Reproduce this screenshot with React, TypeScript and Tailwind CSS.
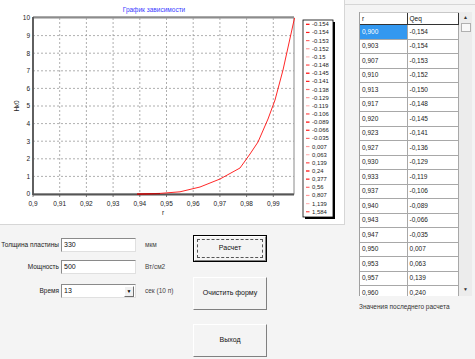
import React from 'react'

const xTicks = ['0,9', '0,91', '0,92', '0,93', '0,94', '0,95', '0,96', '0,97', '0,98', '0,99']
const legend = [
  '-0.154', '-0.154', '-0.153', '-0.152', '-0.15', '-0.148', '-0.145', '-0.141',
  '-0.138', '-0.129', '-0.119', '-0.106', '-0.089', '-0.066', '-0.035', '0,007',
  '0,063', '0,139', '0,24', '0,377', '0,56', '0,807', '1,139', '1,584',
]
const markerColors = ['#ff0000', '#ff1a1a', '#ff6a6a', '#ff9a9a', '#ffb8b8', '#ff4a4a']

const rows = [
  ['0,900', '-0,154'], ['0,903', '-0,154'], ['0,907', '-0,153'], ['0,910', '-0,152'],
  ['0,913', '-0,150'], ['0,917', '-0,148'], ['0,920', '-0,145'], ['0,923', '-0,141'],
  ['0,927', '-0,136'], ['0,930', '-0,129'], ['0,933', '-0,119'], ['0,937', '-0,106'],
  ['0,940', '-0,089'], ['0,943', '-0,066'], ['0,947', '-0,035'], ['0,950', '0,007'],
  ['0,953', '0,063'], ['0,957', '0,139'], ['0,960', '0,240'],
]

const curve = [
  [137, 194], [160, 193.4], [180, 191.8], [200, 187], [220, 179], [240, 168],
  [250, 154], [258, 142], [268, 119], [275, 100], [283, 70], [294.5, 18],
]

const PL = 33
const PR = 294
const PT = 18
const PB = 194
const dx = 26.7
const dy = 17.6
const font = 'Liberation Sans, Arial, sans-serif'

function Chart() {
  return (
    <svg width="345" height="225" viewBox="0 0 345 225" className="block">
      <text x="154" y="12" fontSize="6.5" fill="#3b3bff" textAnchor="middle" fontFamily={font}>
        График зависимости
      </text>
      <rect x={PL} y={PT} width={PR - PL} height={PB - PT} fill="#ffffff" stroke="#8a8a8a" strokeWidth="1" />
      {Array.from({ length: 9 }).map((_, i) => (
        <line key={'v' + i} x1={PL + (i + 1) * dx} y1={PT} x2={PL + (i + 1) * dx} y2={PB} stroke="#9a9a9a" strokeWidth="0.8" strokeDasharray="2 2" />
      ))}
      {Array.from({ length: 9 }).map((_, i) => (
        <line key={'h' + i} x1={PL} y1={PB - (i + 1) * dy} x2={PR} y2={PB - (i + 1) * dy} stroke="#9a9a9a" strokeWidth="0.8" strokeDasharray="2 2" />
      ))}
      <line x1={PL} y1={PT - 1} x2={PR} y2={PT - 1} stroke="#555" strokeWidth="1.2" />
      <line x1={PL} y1={PT - 1} x2={PL} y2={PB + 1} stroke="#555" strokeWidth="1.8" />
      <line x1={PL} y1={PB + 0.5} x2={PR} y2={PB + 0.5} stroke="#555" strokeWidth="1.8" />
      {xTicks.map((t, i) => (
        <g key={t}>
          <line x1={PL + i * dx} y1={PB} x2={PL + i * dx} y2={PB + 3} stroke="#555" strokeWidth="0.8" />
          <text x={PL + i * dx} y={PB + 12} fontSize="6.5" fill="#222" textAnchor="middle" fontFamily={font}>{t}</text>
        </g>
      ))}
      {Array.from({ length: 11 }).map((_, i) => (
        <text key={'y' + i} x={PL - 3} y={PB - i * dy + 2.3} fontSize="6.5" fill="#222" textAnchor="end" fontFamily={font}>{i}</text>
      ))}
      <text x="163" y="215" fontSize="6.5" fill="#222" textAnchor="middle" fontFamily={font}>r</text>
      <text x="0" y="0" fontSize="6.5" fill="#222" textAnchor="middle" fontFamily={font} transform="translate(19 106) rotate(-90)">Нк0</text>
      <polyline points={curve.map((p) => p.join(',')).join(' ')} fill="none" stroke="#ff1010" strokeWidth="0.9" />
      <polyline points="137,194.2 160,193.6" fill="none" stroke="#b01010" strokeWidth="1.4" />

      <rect x="305" y="22" width="30" height="197" fill="#000" />
      <rect x="303" y="20" width="30" height="197" fill="#ffffff" stroke="#000" strokeWidth="0.8" />
      {legend.map((v, i) => (
        <g key={i}>
          <line x1="306" y1={24.3 + i * 8.15} x2="309.5" y2={24.3 + i * 8.15} stroke={markerColors[i % markerColors.length]} strokeWidth="1.2" />
          <text x="312" y={26.3 + i * 8.15} fontSize="5.9" fill="#222" fontFamily={font}>{v}</text>
        </g>
      ))}
    </svg>
  )
}

function Field({ label, value, unit, combo }: { label: string; value: string; unit: string; combo?: boolean }) {
  return (
    <div className="flex items-center h-[14px]">
      <span className="w-[61px] pr-[2px] text-right text-[6.5px] text-[#222] whitespace-nowrap">{label}</span>
      <div className="w-[75px] h-[14px] bg-white border border-t-[#8a8a8a] border-l-[#8a8a8a] border-r-[#e0e0e0] border-b-[#e0e0e0] flex items-center">
        <span className="flex-1 pl-[2px] text-[7px] text-[#111]">{value}</span>
        {combo && (
          <span className="w-[10px] h-[11px] mr-[1px] bg-[#f0f0f0] border border-t-white border-l-white border-r-[#707070] border-b-[#707070] flex items-center justify-center text-[5px] text-black leading-none">
            ▼
          </span>
        )}
      </div>
      <span className="ml-[9px] text-[6.5px] text-[#444] whitespace-nowrap">{unit}</span>
    </div>
  )
}

function Btn({ label, focused, h }: { label: string; focused?: boolean; h: string }) {
  return (
    <div className={`w-[74px] ${h} ${focused ? 'border border-black' : ''}`}>
      <div className="w-full h-full bg-[#f4f4f4] border border-t-white border-l-white border-r-[#808080] border-b-[#808080] flex items-center justify-center">
        <div className={`flex items-center justify-center ${focused ? 'w-[66px] h-[19px] border border-dashed border-[#555]' : ''}`}>
          <span className="text-[7px] text-[#111]">{label}</span>
        </div>
      </div>
    </div>
  )
}

export default function App() {
  return (
    <div className="w-[475px] h-[359px] bg-[#f4f4f4] flex overflow-hidden font-['Liberation_Sans',Arial,sans-serif]">
      <div className="w-[345px] flex flex-col">
        <div className="h-[225px] bg-white border-r border-b border-[#d6d6d6]">
          <Chart />
        </div>
        <div className="flex flex-1">
          <div className="w-[193px] flex flex-col pt-[13px] gap-[8px]">
            <Field label="Толщина пластины" value="330" unit="мкм" />
            <Field label="Мощность" value="500" unit="Вт/см2" />
            <div className="mt-[2px]">
              <Field label="Время" value="13" unit="сек (10 п)" combo />
            </div>
          </div>
          <div className="flex flex-col pt-[10px]">
            <Btn label="Расчет" focused h="h-[27px]" />
            <div className="mt-[15px]">
              <Btn label="Очистить форму" h="h-[33px]" />
            </div>
            <div className="mt-[14px]">
              <Btn label="Выход" h="h-[33px]" />
            </div>
          </div>
        </div>
      </div>

      <div className="flex-1 mt-[4px] border-t border-[#d6d6d6] pl-[14px] pt-[7px]">
        <div className="w-[113px] h-[284px] flex bg-white">
          <div className="w-[100px] h-full overflow-hidden border-l border-[#a0a0a0]">
            <div className="flex h-[13px] border-t border-[#c8c8c8] border-b border-b-[#333]">
              <div className="w-[48px] pl-[2px] text-[6.5px] text-[#111] border-r border-[#333] flex items-center">r</div>
              <div className="w-[52px] pl-[2px] text-[6.5px] text-[#111] border-r border-[#333] flex items-center">Qeq</div>
            </div>
            {rows.map(([r, q], i) => (
              <div key={i} className="flex h-[14.5px] border-b border-[#a8a8a8]">
                <div className={`w-[48px] pl-[2px] text-[6.5px] border-r border-[#a8a8a8] flex items-center ${i === 0 ? 'bg-[#3398f0] text-white' : 'text-[#222]'}`}>{r}</div>
                <div className="w-[52px] pl-[2px] text-[6.5px] text-[#222] border-r border-[#a8a8a8] flex items-center">{q}</div>
              </div>
            ))}
          </div>
          <div className="w-[13px] h-full bg-[#ececec] flex flex-col items-center">
            <span className="text-[5px] leading-none mt-[3px] text-[#333]">▲</span>
            <div className="w-[10px] h-[9px] mt-[3px] bg-[#f8f8f8] border border-[#b0b0b0]" />
            <div className="flex-1" />
            <span className="text-[5px] leading-none mb-[4px] text-[#333]">▼</span>
          </div>
        </div>
        <div className="mt-[6px] text-[6.5px] text-[#333] whitespace-nowrap">Значения последнего расчета</div>
      </div>
    </div>
  )
}
